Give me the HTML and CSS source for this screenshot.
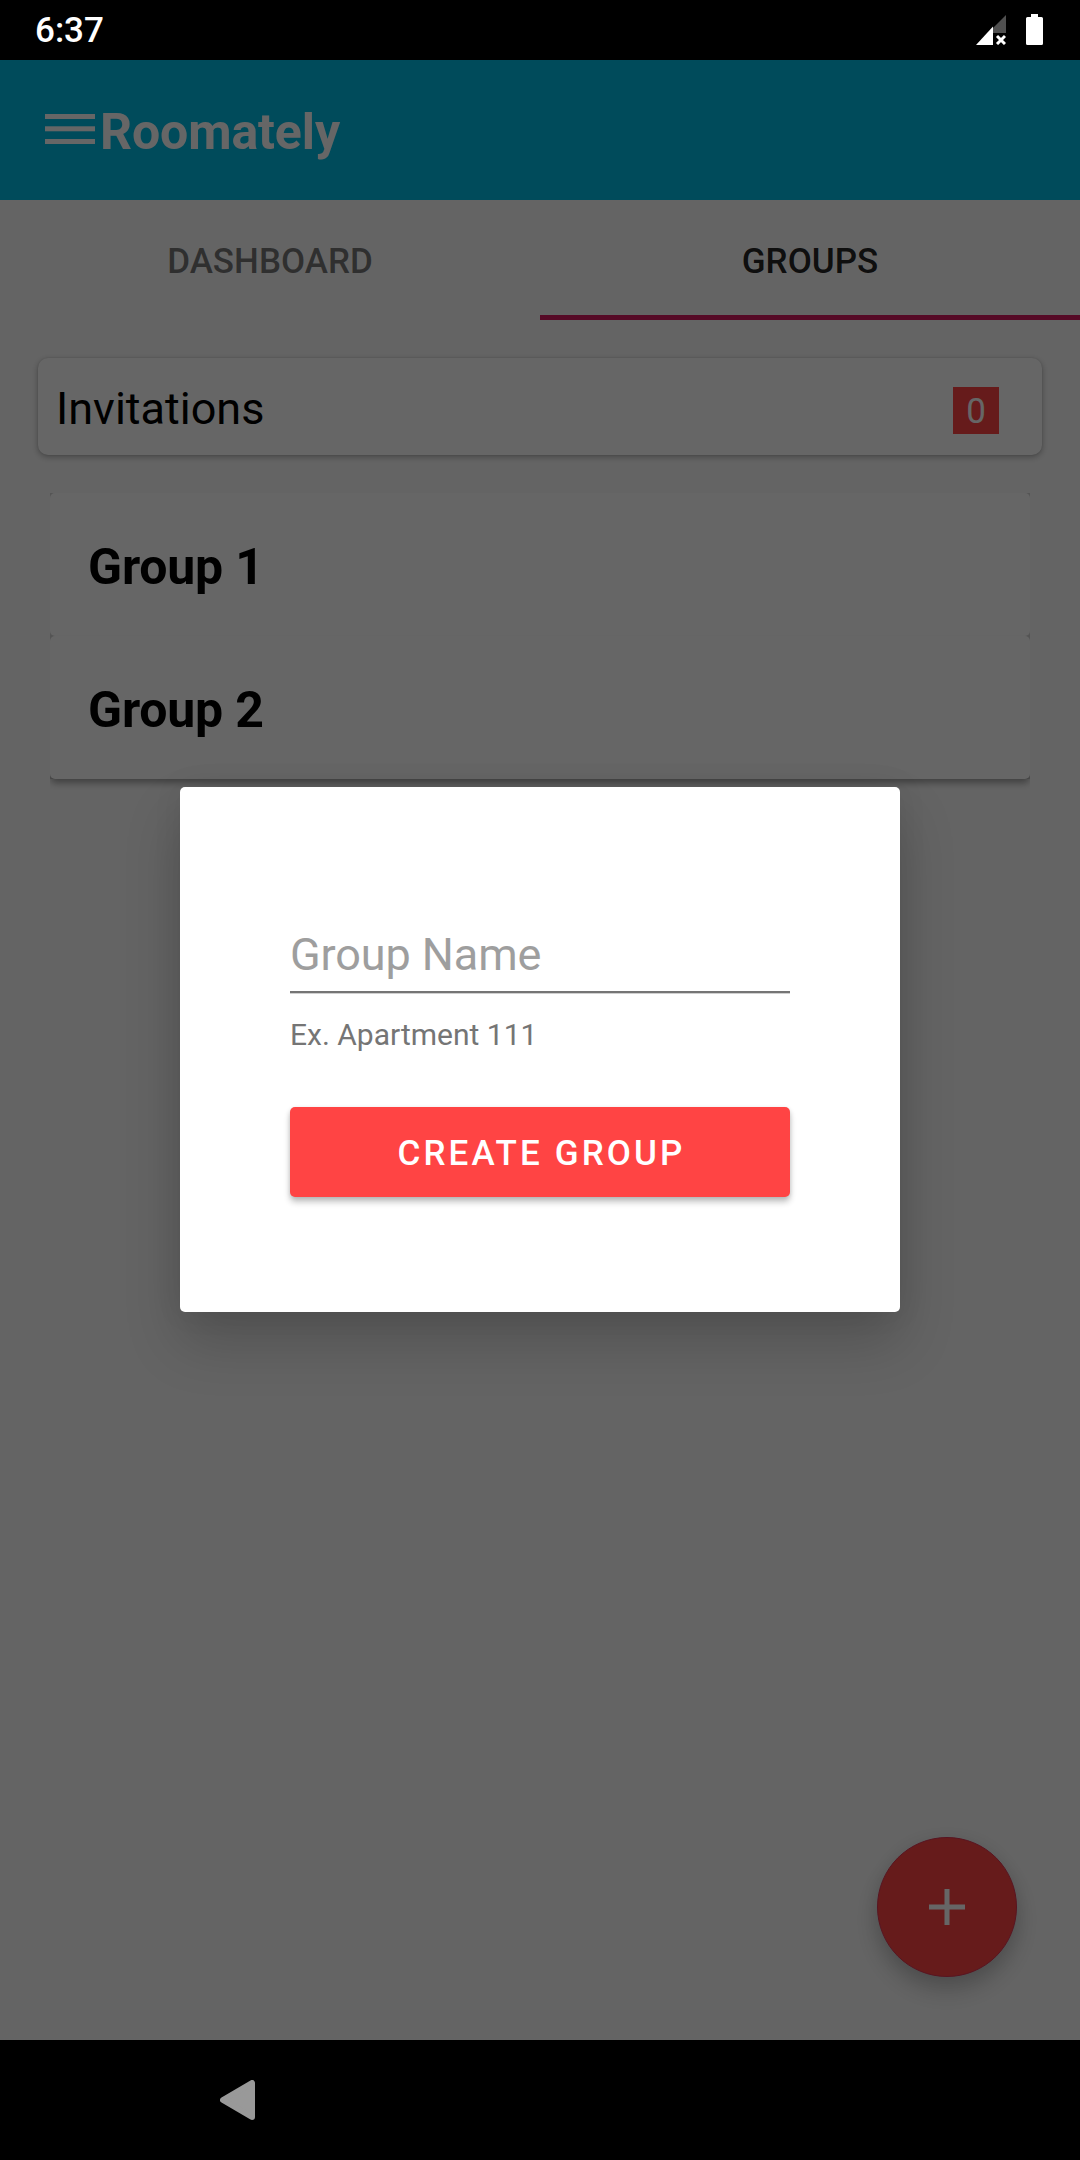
FILE: index.html
```html
<!DOCTYPE html>
<html lang="en">
<head>
<meta charset="utf-8">
<title>Roomately</title>
<link rel="stylesheet" href="styles.css">
</head>
<body>
<div class="phone">
  <div class="status-bar">
    <span class="clock">6:37</span>
    <div class="status-icons">
      <svg class="signal" width="30" height="30" viewBox="0 0 30 30">
        <path d="M30 0V18H17V13Z" fill="#505050"/>
        <path d="M0 30L17 11.5V30Z" fill="#fff"/>
        <path d="M21 21L29 29M29 21L21 29" stroke="#fff" stroke-width="3"/>
      </svg>
      <svg width="17" height="31" viewBox="0 0 17 31">
        <path d="M5 0H12V3H15.500Q17 3 17 4.500V29.500Q17 31 15.500 31H1.500Q0 31 0 29.500V4.500Q0 3 1.500 3H5Z" fill="#fff"/>
      </svg>
    </div>
  </div>

  <div class="app">
    <header class="toolbar">
      <svg width="50" height="30" viewBox="0 0 50 30" fill="#fff">
        <rect width="50" height="5"/>
        <rect y="12.300" width="50" height="5"/>
        <rect y="25" width="50" height="5"/>
      </svg>
      <h1 class="title">Roomately</h1>
    </header>
    <nav class="tabs">
      <div class="tab">DASHBOARD</div>
      <div class="tab tab-active">GROUPS</div>
    </nav>
    <section class="invitations">
      <span class="label">Invitations</span>
      <span class="count">0</span>
    </section>
    <div class="groups">
      <div class="group">Group 1</div>
      <div class="group">Group 2</div>
    </div>
    <div class="fab">
      <svg width="36" height="36" viewBox="0 0 36 36"><path d="M18 0V36M0 18H36" stroke="#fff" stroke-width="5"/></svg>
    </div>
    <div class="scrim">
      <div class="dialog">
        <div class="field">Group Name</div>
        <div class="hint">Ex. Apartment 111</div>
        <div class="button">CREATE GROUP</div>
      </div>
    </div>
  </div>

  <div class="nav-bar">
    <svg width="35" height="40" viewBox="0 0 35 40">
      <path d="M3 20L32 3V37Z" fill="#999" stroke="#999" stroke-width="6" stroke-linejoin="round"/>
    </svg>
  </div>
</div>
</body>
</html>
```
FILE: styles.css
```css
* {
  box-sizing: border-box;
}

body {
  margin: 0;
  font-family: Roboto, sans-serif;
  color: #000;
}

.phone {
  display: flex;
  flex-direction: column;
  width: 1080px;
  height: 2160px;
  overflow: hidden;
  background: #000;
}

.status-bar {
  display: flex;
  align-items: center;
  justify-content: space-between;
  flex: none;
  height: 60px;
  padding: 0 37px 0 35px;
}

.clock {
  padding-top: 2px;
  color: #fff;
  font-size: 35px;
  font-weight: 500;
  line-height: 58px;
}

.status-icons {
  display: flex;
  gap: 20px;
  margin-bottom: 1px;
}

.signal {
  margin-top: 1px;
}

.app {
  position: relative;
  flex: 1;
  background: #fafafa;
}

.toolbar {
  display: flex;
  align-items: center;
  gap: 5px;
  height: 140px;
  padding-left: 45px;
  background: #00bbe3;
}

.toolbar svg {
  margin-bottom: 2px;
}

.title {
  margin: 4px 0 0;
  color: #fff;
  font-size: 50px;
  font-weight: 700;
  letter-spacing: -0.1px;
  line-height: 60px;
}

.tabs {
  display: flex;
  height: 120px;
}

.tab {
  flex: 1;
  border-bottom: 5px solid transparent;
  color: rgba(0, 0, 0, 0.54);
  font-size: 35px;
  font-weight: 500;
  line-height: 124px;
  text-align: center;
}

.tab-active {
  border-color: #d81b60;
  color: rgba(0, 0, 0, 0.87);
}

.invitations {
  display: flex;
  align-items: center;
  justify-content: space-between;
  height: 97px;
  margin: 38px 38px 0;
  padding: 0 43px 0 18px;
  border-radius: 10px;
  background: #fff;
  box-shadow: 0 2px 6px rgba(0, 0, 0, 0.3), 0 0 2px rgba(0, 0, 0, 0.12);
  font-size: 45px;
}

.label {
  padding-top: 4px;
}

.count {
  width: 46px;
  height: 47px;
  margin-top: 8px;
  background: #f44;
  color: #fff;
  font-size: 35px;
  line-height: 50px;
  text-align: center;
}

.groups {
  margin: 38px 50px 0;
  background: #d4d4d4;
  clip-path: inset(0 0 -20px 0);
}

.group {
  height: 143px;
  padding-left: 38px;
  border-radius: 5px;
  background: #fff;
  font-size: 50px;
  font-weight: 700;
  letter-spacing: -0.2px;
  line-height: 148px;
}

.group:last-child {
  box-shadow: 0 5px 7px -1px rgba(0, 0, 0, 0.36);
}

.fab {
  position: absolute;
  right: 63px;
  bottom: 63px;
  display: flex;
  align-items: center;
  justify-content: center;
  width: 140px;
  height: 140px;
  border: 1px solid #dc3452;
  border-radius: 50%;
  background: #f44;
  box-shadow: 0 13px 24px rgba(0, 0, 0, 0.2), 0 3px 18px rgba(0, 0, 0, 0.08);
}

.scrim {
  position: absolute;
  inset: 0;
  display: flex;
  align-items: center;
  justify-content: center;
  background: rgba(0, 0, 0, 0.6);
}

.dialog {
  width: 720px;
  height: 525px;
  margin-bottom: 1px;
  padding: 136px 110px 0;
  border-radius: 5px;
  background: #fff;
  box-shadow: 0 30px 56px rgba(0, 0, 0, 0.19), 0 0 30px rgba(0, 0, 0, 0.07);
}

.field {
  height: 70px;
  border-bottom: 2px solid #757575;
  box-shadow: 0 1px #d0d0d0;
  color: #9e9e9e;
  font-size: 45px;
  letter-spacing: -0.1px;
  line-height: 64px;
}

.hint {
  margin-top: 24px;
  color: #757575;
  font-size: 30px;
  line-height: 36px;
}

.button {
  height: 90px;
  margin-top: 54px;
  padding-left: 3px;
  border-radius: 5px;
  background: #f44;
  box-shadow: 0 5px 6px rgba(0, 0, 0, 0.24), 0 1px 4px rgba(0, 0, 0, 0.1);
  color: #fff;
  font-size: 35px;
  font-weight: 500;
  letter-spacing: 3.12px;
  line-height: 94px;
  text-align: center;
}

.nav-bar {
  display: flex;
  align-items: center;
  flex: none;
  height: 120px;
  padding-left: 220px;
}
```
